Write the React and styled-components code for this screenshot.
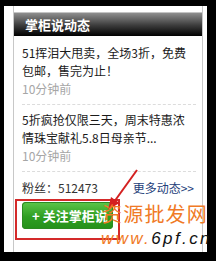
import React from "react";
import styled, { createGlobalStyle } from "styled-components";

const Global = createGlobalStyle`
  html, body { margin: 0; padding: 0; background: #000; }
  body { width: 216px; height: 261px; overflow: hidden; }
  #root { padding: 6px 0 0 4px; }
`;

const Frame = styled.div`
  position: relative;
  width: 203px;
  height: 246px;
  background: #fff;
  font-family: "Noto Sans CJK SC", "Liberation Sans", sans-serif;
`;

const Panel = styled.div`
  margin-left: 9px;
  width: 188px;
  height: 240px;
  border-left: 1px solid #c8c8c8;
  border-right: 1px solid #c8c8c8;
  padding-top: 6px;
`;

const Header = styled.div`
  height: 23px;
  border-top: 1px solid #c4c4c4;
  background: linear-gradient(#8e8e8e 0%, #3a3a3a 55%, #000 100%);
  color: #fff;
  font-size: 13px;
  font-weight: 700;
  line-height: 23px;
  padding-left: 11px;
`;

const List = styled.div`
  padding: 2px 6px 0 8px;
`;

const Item = styled.div`
  padding: 6px 0;
  border-bottom: 1px dashed #dcdcdc;
  font-size: 12px;
  line-height: 18px;
  color: #1a1a1a;
`;

const Line = styled.div`
  white-space: nowrap;
`;

const Time = styled.div`
  color: #a6a6a6;
`;

const Footer = styled.div`
  display: flex;
  justify-content: space-between;
  padding: 7px 2px 0 0;
  font-size: 12px;
  line-height: 18px;
  color: #333;
`;

const More = styled.a`
  color: #24407a;
  text-decoration: none;
`;

const FollowButton = styled.div`
  display: flex;
  align-items: center;
  gap: 3px;
  margin: 5px 0 0 8px;
  padding-left: 10px;
  width: 81px;
  height: 27px;
  border-radius: 4px;
  background: linear-gradient(#5ec64a, #2f9e22 55%, #24901a);
  color: #fff;
  font-size: 13px;
  font-weight: 700;
  line-height: 27px;
  box-shadow: inset 0 0 0 1px #2b8a20;
`;

const Mark = styled.div`
  position: absolute;
  left: 11px;
  top: 193px;
  width: 101px;
  height: 37px;
  border: 2px solid #d42a2a;
`;

const Arrow = styled.svg`
  position: absolute;
  left: 96px;
  top: 154px;
`;

const Stamp = styled.div`
  position: absolute;
  left: ${(p) => p.$left}px;
  top: ${(p) => p.$top}px;
  font-size: ${(p) => p.$size}px;
  letter-spacing: ${(p) => p.$spacing}px;
  line-height: 1;
  white-space: nowrap;
  font-family: ${(p) => p.$font};
  font-style: ${(p) => (p.$italic ? "italic" : "normal")};
  color: #f07a26;
`;

const Dark = styled.span`
  color: #111;
`;

export default function App() {
  return (
    <>
      <Global />
      <Frame>
        <Panel>
          <Header>掌柜说动态</Header>
          <List>
            <Item>
              <Line>51挥泪大甩卖，全场3折，免费</Line>
              <Line>包邮，售完为止！</Line>
              <Time>10分钟前</Time>
            </Item>
            <Item>
              <Line>5折疯抢仅限三天，周末特惠浓</Line>
              <Line>情珠宝献礼5.8日母亲节...</Line>
              <Time>10分钟前</Time>
            </Item>
            <Footer>
              <span>粉丝：512473</span>
              <More href="#">更多动态&gt;&gt;</More>
            </Footer>
          </List>
          <FollowButton>
            <span>+</span>
            <span>关注掌柜说</span>
          </FollowButton>
        </Panel>
        <Mark />
        <Arrow width="44" height="52" viewBox="0 0 44 52">
          <line x1="37" y1="10" x2="14" y2="42" stroke="#d42020" strokeWidth="2" />
          <polygon points="8,50 19.5,43 11,37" fill="#d42020" />
        </Arrow>
        <Stamp $left={98} $top={198} $size={20} $spacing={1.2} $font={'"Noto Sans CJK SC", sans-serif'}>
          资源批发网
        </Stamp>
        <Stamp $left={97} $top={224} $size={17} $spacing={2.4} $italic $font={'"Liberation Sans", sans-serif'}>
          www.<Dark>6pf.cn</Dark>
        </Stamp>
      </Frame>
    </>
  );
}
